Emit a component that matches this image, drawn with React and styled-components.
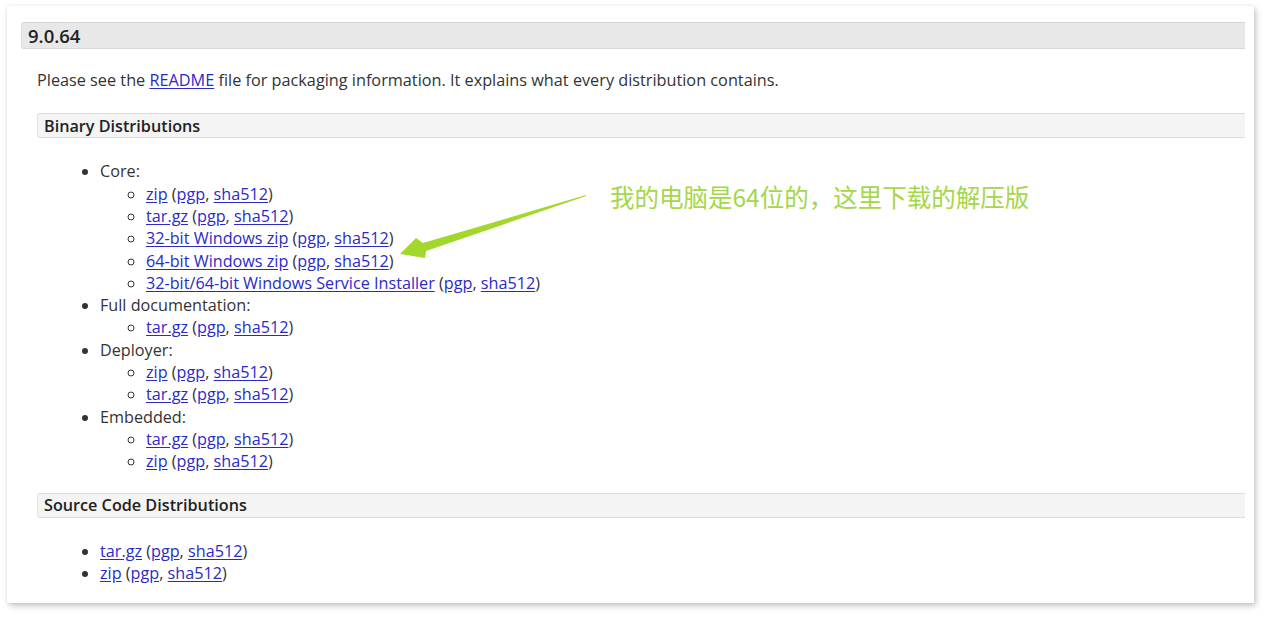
import React from "react";
import styled, { createGlobalStyle } from "styled-components";

const Global = createGlobalStyle`
  html, body { margin: 0; padding: 0; background: #ffffff; }
  body { font-family: "Open Sans", "Noto Sans", sans-serif; color: #333; }
`;

const Page = styled.div`
  width: 1274px;
  height: 624px;
  padding: 6px 0 0 7px;
  box-sizing: border-box;
`;

const Card = styled.div`
  position: relative;
  width: 1247px;
  height: 597px;
  background: #fff;
  box-shadow: 2px 3px 6px rgba(0, 0, 0, 0.22), 0 0 3px rgba(0, 0, 0, 0.08);
  padding: 16px 9px 0 14px;
  box-sizing: border-box;
  overflow: hidden;
`;

const VersionHead = styled.div`
  height: 27px;
  background: #e8e8e8;
  border-top: 1px solid #d6d6d6;
  border-bottom: 1px solid #d6d6d6;
  border-left: 1px solid #dedede;
  border-radius: 3px 0 0 3px;
  box-sizing: border-box;
  padding-left: 6px;
  display: flex;
  align-items: center;
  font-weight: 600;
  font-size: 18.5px;
  color: #222;
`;

const Body = styled.div`
  padding-left: 16px;
`;

const Para = styled.p`
  margin: 20px 0 0 0;
  font-size: 16.25px;
  line-height: 22.4px;
`;

const SectionHead = styled.div`
  height: 24.5px;
  background: #f4f4f4;
  border-top: 1px solid #dcdcdc;
  border-bottom: 1px solid #dcdcdc;
  border-left: 1px solid #e2e2e2;
  border-radius: 3px 0 0 3px;
  box-sizing: border-box;
  padding-left: 6px;
  display: flex;
  align-items: center;
  font-weight: 600;
  font-size: 16.2px;
  color: #222;
  margin-top: ${(p) => p.$mt}px;
`;

const List = styled.ul`
  margin: ${(p) => p.$mt}px 0 0 0;
  padding-left: 63px;
  list-style: disc;
  font-size: 16.2px;
  line-height: 22.3px;
`;

const SubList = styled.ul`
  margin: 0;
  padding-left: 46px;
  list-style: circle;
`;

const Link = styled.a`
  color: #2a2ac8;
  text-decoration: underline;
  text-underline-offset: 2px;
`;

const Note = styled.div`
  position: absolute;
  left: 603px;
  top: 176px;
  font-family: "Noto Sans CJK SC", sans-serif;
  font-size: 24.5px;
  line-height: 30px;
  color: #a6d64a;
  white-space: nowrap;
`;

const ArrowSvg = styled.svg`
  position: absolute;
  left: 378px;
  top: 177px;
`;

const Dl = ({ name }) => (
  <>
    <Link href="#">{name}</Link> (<Link href="#">pgp</Link>, <Link href="#">sha512</Link>)
  </>
);

export default function App() {
  return (
    <>
      <Global />
      <Page>
        <Card>
          <VersionHead>9.0.64</VersionHead>
          <Body>
            <Para>
              Please see the <Link href="#">README</Link> file for packaging information. It explains what every distribution contains.
            </Para>
            <SectionHead $mt={22}>Binary Distributions</SectionHead>
            <List $mt={22.5}>
              <li>
                Core:
                <SubList>
                  <li><Dl name="zip" /></li>
                  <li><Dl name="tar.gz" /></li>
                  <li><Dl name="32-bit Windows zip" /></li>
                  <li><Dl name="64-bit Windows zip" /></li>
                  <li><Dl name="32-bit/64-bit Windows Service Installer" /></li>
                </SubList>
              </li>
              <li>
                Full documentation:
                <SubList>
                  <li><Dl name="tar.gz" /></li>
                </SubList>
              </li>
              <li>
                Deployer:
                <SubList>
                  <li><Dl name="zip" /></li>
                  <li><Dl name="tar.gz" /></li>
                </SubList>
              </li>
              <li>
                Embedded:
                <SubList>
                  <li><Dl name="tar.gz" /></li>
                  <li><Dl name="zip" /></li>
                </SubList>
              </li>
            </List>
            <SectionHead $mt={20.5}>Source Code Distributions</SectionHead>
            <List $mt={22}>
              <li><Dl name="tar.gz" /></li>
              <li><Dl name="zip" /></li>
            </List>
          </Body>
          <ArrowSvg width="210" height="80" viewBox="0 0 210 80">
            <polygon
              points="201,12 38,60 31,55 15,71 40,75 41,68 201,13"
              fill="#a2d72c"
            />
          </ArrowSvg>
          <Note>我的电脑是64位的，这里下载的解压版</Note>
        </Card>
      </Page>
    </>
  );
}
